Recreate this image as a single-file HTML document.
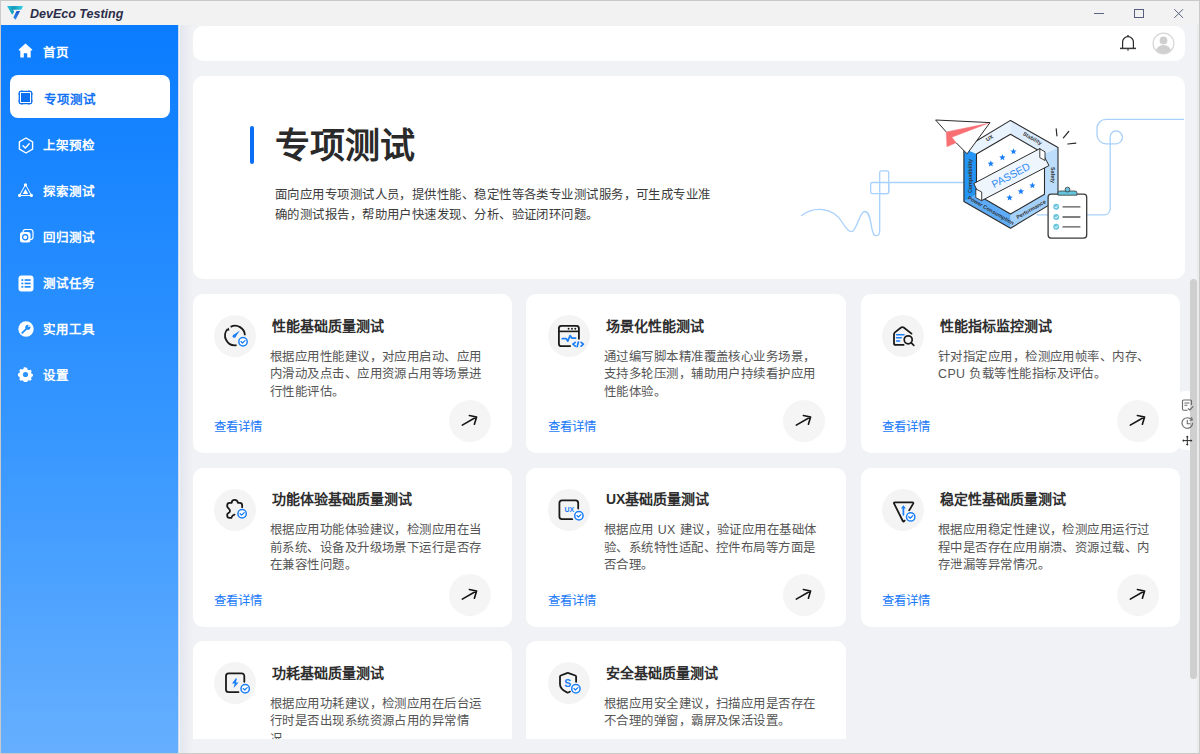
<!DOCTYPE html>
<html lang="zh-CN"><head><meta charset="utf-8">
<style>
*{box-sizing:border-box;margin:0;padding:0}
html,body{width:1200px;height:754px;overflow:hidden;background:#f1f2f5;font-family:"Liberation Sans",sans-serif}
.abs{position:absolute}
#win{position:absolute;left:0;top:0;width:1200px;height:754px;background:#f1f2f5;overflow:hidden}
#tb{position:absolute;left:0;top:0;width:1200px;height:25px;background:#f2f2f2}
#tb .t{position:absolute;left:30px;top:6.5px;font-size:12.5px;font-weight:bold;font-style:italic;color:#2b2d4a}
#side{position:absolute;left:0;top:25px;width:178px;height:728px;background:linear-gradient(180deg,#0a7cff 0%,#3596ff 55%,#66afff 100%)}
.nav{position:absolute;left:0;width:178px;height:24px;color:#fff;font-size:12.5px;font-weight:bold;line-height:16px}
.nav span{position:absolute;left:43px;top:5.5px}
.nav svg{position:absolute;left:17px;top:4px}
.nav.sel{left:10px;width:159.5px;height:43px;background:#fff;border-radius:8px;color:#1273f5}
#hdr{position:absolute;left:193px;top:26px;width:992px;height:35px;background:#fff;border-radius:10px}
#hero{position:absolute;left:193px;top:76px;width:992px;height:202.7px;background:#fff;border-radius:10px}
.card{position:absolute;width:319px;height:159px;background:#fff;border-radius:10px}
.card .ic{position:absolute;left:21px;top:21px;width:42px;height:42px;border-radius:50%;background:#f4f4f4}
.card .ic svg{position:absolute;left:0;top:0}
.card h3{position:absolute;left:79px;top:22.5px;font-size:14px;line-height:18px;font-weight:bold;color:#2e2e2e;white-space:nowrap}
.card p{position:absolute;left:77px;top:54.5px;white-space:nowrap;letter-spacing:0.45px;font-size:12.4px;line-height:17.6px;color:#555}
.card .lk{position:absolute;left:21px;top:125px;font-size:12.4px;line-height:16px;color:#1a7af8;font-weight:500}
.card.c2>*{margin-left:1px}
.card .go{position:absolute;left:256px;top:106px;width:42px;height:42px;border-radius:50%;background:#f5f5f5}
</style></head><body>
<div id="win">
 <div id="tb">
  <svg class="abs" style="left:0;top:0" width="30" height="25" viewBox="0 0 30 25">
   <defs><linearGradient id="lg1" x1="0" y1="0" x2="1" y2="0"><stop offset="0" stop-color="#2cc9dc"/><stop offset="0.4" stop-color="#1597ba"/><stop offset="1" stop-color="#34d4e2"/></linearGradient>
   <linearGradient id="lg2" x1="0" y1="0" x2="0" y2="1"><stop offset="0" stop-color="#1d4fc8"/><stop offset="1" stop-color="#2f90f2"/></linearGradient></defs>
   <path d="M7 6H23.1L21.2 9.8H13.2L14.1 12L12.1 14.8Z" fill="url(#lg1)"/><path d="M16.6 10.9H20.1L15.6 19.8L13.3 17.4Z" fill="url(#lg2)"/>
  </svg>
  <div class="t">DevEco Testing</div>
  <div class="abs" style="left:1094px;top:13px;width:10px;height:1px;background:#5a6480"></div>
  <div class="abs" style="left:1134px;top:9px;width:9.5px;height:9px;border:1px solid #56607e"></div>
  <svg class="abs" style="left:1173px;top:8px" width="12" height="11" viewBox="0 0 12 11"><path d="M1.3 1.2L10 9.9M10 1.2L1.3 9.9" stroke="#56607e" stroke-width="1"/></svg>
 </div>
 <div id="side">
  <div class="nav" style="top:14px"><svg width="15" height="15" viewBox="0 0 15 15" style="left:18px;top:4px"><path d="M7.5 0.5L0.8 6.6V7.4H2.3V14.5H5.8V10.2H9.2V14.5H12.7V7.4H14.2V6.6Z" fill="#fff"/></svg><span>首页</span></div>
  <div class="nav sel" style="top:50px"><svg width="15" height="15" viewBox="0 0 15 15" style="left:8px;top:15px"><rect x="1.3" y="1.3" width="12.4" height="12.4" rx="1.5" fill="none" stroke="#0a6ff0" stroke-width="1.3"/><rect x="3" y="3" width="9" height="9" fill="#0a6ff0"/><path d="M0 4h1.3M0 11h1.3M13.7 4H15M13.7 11H15M4 0v1.3M11 0v1.3M4 13.7V15M11 13.7V15" stroke="#0a6ff0" stroke-width="0.8"/></svg><span style="left:33.5px;top:16.5px">专项测试</span></div>
  <div class="nav" style="top:107px"><svg width="16" height="17" viewBox="0 0 16 17" style="left:18px;top:4.5px"><path d="M8 1L14.6 4.8V12.2L8 16L1.4 12.2V4.8Z" fill="none" stroke="#fff" stroke-width="1.4" stroke-linejoin="round"/><path d="M5 8.7L7.3 10.9L11.2 6.8" fill="none" stroke="#fff" stroke-width="1.4" stroke-linecap="round" stroke-linejoin="round"/></svg><span>上架预检</span></div>
  <div class="nav" style="top:153px"><svg width="15" height="15" viewBox="0 0 15 15" style="left:18px;top:5px"><path d="M7.5 1.5L1.5 12.5H13.5Z" fill="none" stroke="#fff" stroke-width="1"/><path d="M7.5 6L4.8 11H10.2Z" fill="#fff"/><circle cx="7.5" cy="1.8" r="1.6" fill="#fff"/><circle cx="1.6" cy="12.4" r="1.6" fill="#fff"/><circle cx="13.4" cy="12.4" r="1.6" fill="#fff"/></svg><span>探索测试</span></div>
  <div class="nav" style="top:199px"><svg width="15" height="15" viewBox="0 0 15 15" style="left:18.5px;top:5px"><rect x="4" y="0.5" width="10" height="10" rx="2.5" fill="none" stroke="#fff" stroke-width="1.2"/><rect x="1" y="3" width="10.5" height="10.5" rx="2.5" fill="#fff"/><circle cx="6.2" cy="8.3" r="2.6" fill="none" stroke="#1283ff" stroke-width="1.2"/><path d="M6.2 5.5l1.5 0.3" stroke="#1283ff" stroke-width="1"/></svg><span>回归测试</span></div>
  <div class="nav" style="top:245px"><svg width="16" height="17" viewBox="0 0 16 17" style="left:18px;top:4.5px"><rect x="0.5" y="0.5" width="15" height="16" rx="3" fill="#fff"/><g fill="#1e8aff"><rect x="3.4" y="4.2" width="1.9" height="1.7"/><rect x="3.4" y="7.6" width="1.9" height="1.7"/><rect x="3.4" y="11" width="1.9" height="1.7"/><rect x="6.6" y="4.2" width="6" height="1.7"/><rect x="6.6" y="7.6" width="6" height="1.7"/><rect x="6.6" y="11" width="6" height="1.7"/></g></svg><span>测试任务</span></div>
  <div class="nav" style="top:291px"><svg width="16" height="16" viewBox="0 0 15 15" style="left:18px;top:4.5px"><circle cx="7.5" cy="7.5" r="7.2" fill="#fff"/><path d="M4 11.2L7.6 7.6" stroke="#2190ff" stroke-width="1.7" stroke-linecap="round"/><circle cx="9.2" cy="5.8" r="2.4" fill="#2190ff"/><path d="M9.6 3.6L11.6 5.6L10.4 4.2Z" fill="#fff"/><circle cx="10.2" cy="4.8" r="0.9" fill="#fff"/></svg><span>实用工具</span></div>
  <div class="nav" style="top:337px"><svg width="15" height="15" viewBox="0 0 15 15" style="left:18px;top:5px"><path d="M7.5 0.5l1.6 0.3 0.4 1.7 1.3 0.8 1.7-0.5 1.1 1.2-0.5 1.7 0.8 1.3 1.6 0.5v1.6l-1.6 0.5-0.8 1.3 0.5 1.7-1.1 1.2-1.7-0.5-1.3 0.8-0.4 1.7-1.6 0.3-1.6-0.3-0.4-1.7-1.3-0.8-1.7 0.5-1.1-1.2 0.5-1.7-0.8-1.3-1.6-0.5V6.7l1.6-0.5 0.8-1.3-0.5-1.7 1.1-1.2 1.7 0.5 1.3-0.8 0.4-1.7Z" fill="#fff"/><circle cx="7.5" cy="7.5" r="2.6" fill="#2a94ff"/></svg><span>设置</span></div>
 </div>
 <div id="hdr">
  <svg class="abs" style="left:926px;top:8px" width="18" height="18" viewBox="0 0 18 18"><path d="M3.6 14.2V8.2A5.4 5.6 0 0 1 14.4 8.2V14.2" fill="none" stroke="#2a2a2a" stroke-width="1.2"/><path d="M1 14.4H17" stroke="#3a3a3a" stroke-width="1.5"/><circle cx="9" cy="1.9" r="0.9" fill="#2a2a2a"/><rect x="8.3" y="15.2" width="1.4" height="1.4" fill="#2a2a2a"/></svg>
  <svg class="abs" style="left:959px;top:6px" width="23" height="23" viewBox="0 0 23 23"><circle cx="11.5" cy="11.5" r="10.4" fill="#fff" stroke="#d6d6d6" stroke-width="1.2"/><defs><clipPath id="avc"><circle cx="11.5" cy="11.5" r="10"/></clipPath></defs><g clip-path="url(#avc)" fill="#d0d0d0"><circle cx="11.5" cy="8.4" r="3.9"/><ellipse cx="11.5" cy="20" rx="7.8" ry="7"/></g></svg>
 </div>
 <div id="scroll" style="position:absolute;left:178px;top:61px;width:1022px;height:678px;overflow:hidden">
 <div class="card" style="left:15px;top:233px"><div class="ic"><svg width="42" height="42" viewBox="0 0 42 42"><path d="M16.6 11.9A9.8 9.8 0 0 1 30.9 20.2" fill="none" stroke="#1a1a1a" stroke-width="1.8"/><path d="M22.6 30.2A9.8 9.8 0 0 1 13.6 14" fill="none" stroke="#1a1a1a" stroke-width="1.8"/><path d="M12.2 15.2L14.8 12.4L15.4 15.8Z" fill="#1a1a1a"/><path d="M19 20.2L25.8 15.6L21.4 22.2Z" fill="#1b7ef7"/><circle cx="20.2" cy="21.2" r="1.6" fill="#1b7ef7"/><circle cx="29" cy="26.7" r="5.6" fill="#f3f3f3"/><circle cx="29" cy="26.7" r="5.4" fill="#fff"/><circle cx="29" cy="26.7" r="4.2" fill="#fff" stroke="#1b7ef7" stroke-width="1.5"/><path d="M27 26.599999999999998L28.5 28.0L31 25.599999999999998" fill="none" stroke="#1b7ef7" stroke-width="1.3" stroke-linecap="round" stroke-linejoin="round"/></svg></div><h3>性能基础质量测试</h3><p>根据应用性能建议，对应用启动、应用<br>内滑动及点击、应用资源占用等场景进<br>行性能评估。</p><div class="lk">查看详情</div><div class="go"><svg width="42" height="42" viewBox="0 0 42 42"><path d="M13.3 25.1L27.4 17M20.4 15.5L27.6 17L25.4 24.3" fill="none" stroke="#141414" stroke-width="1.6" stroke-linecap="round" stroke-linejoin="round"/></svg></div></div>
 <div class="card c2" style="width:320px;left:348px;top:233px"><div class="ic"><svg width="42" height="42" viewBox="0 0 42 42"><path d="M30.9 24.5V13.4A2.5 2.5 0 0 0 28.4 10.9H13.4A2.5 2.5 0 0 0 10.9 13.4V28.7A2.5 2.5 0 0 0 13.4 31.2H22.8" fill="none" stroke="#1a1a1a" stroke-width="1.8"/><path d="M10.9 16.4H30.9" stroke="#1a1a1a" stroke-width="1.6"/><circle cx="20.6" cy="13.8" r="0.95" fill="#1a1a1a"/><circle cx="24" cy="13.8" r="0.95" fill="#1a1a1a"/><circle cx="27.3" cy="13.8" r="0.95" fill="#1a1a1a"/><path d="M14.2 23.7H18.3L19.8 26.2L22 20.6L24 23.1H27.6" fill="none" stroke="#1b7ef7" stroke-width="1.7" stroke-linecap="round" stroke-linejoin="round"/><path d="M27.3 27.3L24.9 29.2L27.3 31.1M33.1 27.3L35.4 29.2L33.1 31.1M30.4 27L29.2 31.6" fill="none" stroke="#1b7ef7" stroke-width="1.7" stroke-linecap="round" stroke-linejoin="round"/></svg></div><h3>场景化性能测试</h3><p>通过编写脚本精准覆盖核心业务场景，<br>支持多轮压测，辅助用户持续看护应用<br>性能体验。</p><div class="lk">查看详情</div><div class="go"><svg width="42" height="42" viewBox="0 0 42 42"><path d="M13.3 25.1L27.4 17M20.4 15.5L27.6 17L25.4 24.3" fill="none" stroke="#141414" stroke-width="1.6" stroke-linecap="round" stroke-linejoin="round"/></svg></div></div>
 <div class="card" style="left:683px;top:233px"><div class="ic"><svg width="42" height="42" viewBox="0 0 42 42"><path d="M29.5 18.6L21.7 12.6Q20.4 11.7 19.1 12.6L12.9 17.4Q12 18.1 12 19.3V28.2Q12 29.9 13.7 29.9H21.6" fill="none" stroke="#1a1a1a" stroke-width="1.8" stroke-linecap="round"/><path d="M14.6 19.8H22M14.6 22.8H19.2M14.6 26H17.6" stroke="#1b7ef7" stroke-width="1.6" stroke-linecap="round"/><circle cx="26.2" cy="24.8" r="4" fill="none" stroke="#1a1a1a" stroke-width="1.7"/><path d="M29.1 27.7L31.8 30.3" stroke="#1a1a1a" stroke-width="1.7" stroke-linecap="round"/></svg></div><h3>性能指标监控测试</h3><p>针对指定应用，检测应用帧率、内存、<br>CPU 负载等性能指标及评估。</p><div class="lk">查看详情</div><div class="go"><svg width="42" height="42" viewBox="0 0 42 42"><path d="M13.3 25.1L27.4 17M20.4 15.5L27.6 17L25.4 24.3" fill="none" stroke="#141414" stroke-width="1.6" stroke-linecap="round" stroke-linejoin="round"/></svg></div></div>
 <div class="card" style="left:15px;top:406.5px"><div class="ic"><svg width="42" height="42" viewBox="0 0 42 42"><path d="M28.15 18.2V16.3Q28.15 13.8 25.8 13.8H23.9C23.6 11.6 22.2 10.9 20.6 10.9C19 10.9 17.8 11.8 17.6 13.8H15.7Q13.2 13.8 13.2 16.3V17.4C13.4 19.2 16 19.8 16 21.9C16 23.8 13.4 24.2 13.2 25.6V26.5Q13.2 28.9 15.6 28.9H17.3C17.9 27 19 25.9 20.5 25.6" fill="none" stroke="#1a1a1a" stroke-width="1.8" stroke-linecap="round" stroke-linejoin="round"/><circle cx="28.1" cy="24.8" r="5.6" fill="#f3f3f3"/><circle cx="28.1" cy="24.8" r="5.4" fill="#fff"/><circle cx="28.1" cy="24.8" r="4.2" fill="#fff" stroke="#1b7ef7" stroke-width="1.5"/><path d="M26.1 24.7L27.6 26.1L30.1 23.7" fill="none" stroke="#1b7ef7" stroke-width="1.3" stroke-linecap="round" stroke-linejoin="round"/></svg></div><h3>功能体验基础质量测试</h3><p>根据应用功能体验建议，检测应用在当<br>前系统、设备及升级场景下运行是否存<br>在兼容性问题。</p><div class="lk">查看详情</div><div class="go"><svg width="42" height="42" viewBox="0 0 42 42"><path d="M13.3 25.1L27.4 17M20.4 15.5L27.6 17L25.4 24.3" fill="none" stroke="#141414" stroke-width="1.6" stroke-linecap="round" stroke-linejoin="round"/></svg></div></div>
 <div class="card c2" style="width:320px;left:348px;top:406.5px"><div class="ic"><svg width="42" height="42" viewBox="0 0 42 42"><path d="M30.2 19.5V14A2.6 2.6 0 0 0 27.6 11.4H14A2.6 2.6 0 0 0 11.4 14V27.6A2.6 2.6 0 0 0 14 30.2H24.2" fill="none" stroke="#1a1a1a" stroke-width="1.8" stroke-linecap="round"/><text x="21.3" y="23.4" text-anchor="middle" font-family="Liberation Sans" font-weight="bold" font-size="7" fill="#1b7ef7">UX</text><circle cx="30.9" cy="26.7" r="5.6" fill="#f3f3f3"/><circle cx="30.9" cy="26.7" r="5.4" fill="#fff"/><circle cx="30.9" cy="26.7" r="4.2" fill="#fff" stroke="#1b7ef7" stroke-width="1.5"/><path d="M28.9 26.599999999999998L30.4 28.0L32.9 25.599999999999998" fill="none" stroke="#1b7ef7" stroke-width="1.3" stroke-linecap="round" stroke-linejoin="round"/></svg></div><h3>UX基础质量测试</h3><p>根据应用 UX 建议，验证应用在基础体<br>验、系统特性适配、控件布局等方面是<br>否合理。</p><div class="lk">查看详情</div><div class="go"><svg width="42" height="42" viewBox="0 0 42 42"><path d="M13.3 25.1L27.4 17M20.4 15.5L27.6 17L25.4 24.3" fill="none" stroke="#141414" stroke-width="1.6" stroke-linecap="round" stroke-linejoin="round"/></svg></div></div>
 <div class="card" style="left:683px;top:406.5px"><div class="ic"><svg width="42" height="42" viewBox="0 0 42 42"><path d="M27.2 21.4L31.2 14.6Q31.7 13.4 30.4 13.4H12.8Q11.5 13.4 12.1 14.6L20.8 32Q21.6 33.2 22.6 31.6" fill="none" stroke="#1a1a1a" stroke-width="1.8" stroke-linecap="round" stroke-linejoin="round"/><path d="M21.4 25.8V18" stroke="#1b7ef7" stroke-width="1.7" stroke-linecap="round"/><path d="M19 19.6L21.4 16.3L23.9 19.6Z" fill="#1b7ef7"/><circle cx="28.7" cy="27.9" r="5.6" fill="#f3f3f3"/><circle cx="28.7" cy="27.9" r="5.4" fill="#fff"/><circle cx="28.7" cy="27.9" r="4.2" fill="#fff" stroke="#1b7ef7" stroke-width="1.5"/><path d="M26.7 27.799999999999997L28.2 29.2L30.7 26.799999999999997" fill="none" stroke="#1b7ef7" stroke-width="1.3" stroke-linecap="round" stroke-linejoin="round"/></svg></div><h3>稳定性基础质量测试</h3><p>根据应用稳定性建议，检测应用运行过<br>程中是否存在应用崩溃、资源过载、内<br>存泄漏等异常情况。</p><div class="lk">查看详情</div><div class="go"><svg width="42" height="42" viewBox="0 0 42 42"><path d="M13.3 25.1L27.4 17M20.4 15.5L27.6 17L25.4 24.3" fill="none" stroke="#141414" stroke-width="1.6" stroke-linecap="round" stroke-linejoin="round"/></svg></div></div>
 <div class="card" style="left:15px;top:580px"><div class="ic"><svg width="42" height="42" viewBox="0 0 42 42"><path d="M30.3 19.8V14A2.6 2.6 0 0 0 27.7 11.4H14.6A2.6 2.6 0 0 0 12 14V27.5A2.6 2.6 0 0 0 14.6 30.1H24.5" fill="none" stroke="#1a1a1a" stroke-width="1.8" stroke-linecap="round"/><path d="M21.9 16.2L18 21.5H20.7L19.6 26L24.6 20.4H21.9L22.9 16.4Z" fill="#1b7ef7"/><circle cx="31.2" cy="26.7" r="5.6" fill="#f3f3f3"/><circle cx="31.2" cy="26.7" r="5.4" fill="#fff"/><circle cx="31.2" cy="26.7" r="4.2" fill="#fff" stroke="#1b7ef7" stroke-width="1.5"/><path d="M29.2 26.599999999999998L30.7 28.0L33.2 25.599999999999998" fill="none" stroke="#1b7ef7" stroke-width="1.3" stroke-linecap="round" stroke-linejoin="round"/></svg></div><h3>功耗基础质量测试</h3><p>根据应用功耗建议，检测应用在后台运<br>行时是否出现系统资源占用的异常情<br>况。</p></div>
 <div class="card c2" style="width:320px;left:348px;top:580px"><div class="ic"><svg width="42" height="42" viewBox="0 0 42 42"><path d="M28.1 19.8V14.6Q28.1 13.8 27.3 13.5L20.6 11.1Q19.8 10.8 19 11.1L12.8 13.5Q12 13.8 12 14.6V22.2Q12 27.2 19 30.4Q20.4 30.9 22 29.6" fill="none" stroke="#1a1a1a" stroke-width="1.8" stroke-linecap="round" stroke-linejoin="round"/><text x="19.8" y="24.6" text-anchor="middle" font-family="Liberation Sans" font-weight="bold" font-size="10.5" fill="#1b7ef7">S</text><circle cx="27.9" cy="26.7" r="5.6" fill="#f3f3f3"/><circle cx="27.9" cy="26.7" r="5.4" fill="#fff"/><circle cx="27.9" cy="26.7" r="4.2" fill="#fff" stroke="#1b7ef7" stroke-width="1.5"/><path d="M25.9 26.599999999999998L27.4 28.0L29.9 25.599999999999998" fill="none" stroke="#1b7ef7" stroke-width="1.3" stroke-linecap="round" stroke-linejoin="round"/></svg></div><h3>安全基础质量测试</h3><p>根据应用安全建议，扫描应用是否存在<br>不合理的弹窗，霸屏及保活设置。</p></div>
</div>
 <div id="hero">
<svg class="abs" style="left:0;top:0" width="991" height="202" viewBox="193 76 991 202">
 <g fill="none" stroke="#a9d1fb" stroke-width="1.3" stroke-linecap="round">
  <path d="M801.7 215.5C813 207 832 206 842 222C847 230 850 233 853 231C858 226 860 211.5 864.7 211.5C870 211.5 870.5 222 872 229C873 234 874 235.7 876 235.7C878.5 235.7 879.7 234 879.7 231V193.7"/>
  <rect x="879.7" y="170.8" width="9" height="22.9" rx="1.6"/>
  <rect x="870.7" y="182.5" width="18" height="11.2" rx="1.6"/>
  <path d="M888.7 182.5H964"/>
  <path d="M1184 119.3H1106A9 9 0 0 0 1097 128.3V134.8A9 9 0 0 0 1106 143.8H1116A6.45 6.45 0 0 0 1116 130.9A6 6 0 0 0 1110.2 136.9V209A5.8 5.8 0 0 1 1104.4 214.8H1087"/>
  <path d="M1037 214.8H1048"/>
 </g>
 <polygon points="963.9,148.5 1010.5,120.4 1010.5,134.2 976.5,153.9" fill="#e9f4fe" />
 <polygon points="1010.5,120.4 1058,147.6 1044.5,153.9 1010.5,134.2" fill="#ddedfd" />
 <polygon points="1058,147.6 1058,199.6 1044.5,194.2 1044.5,153.9" fill="#bcdefc" />
 <polygon points="1058,199.6 1010.5,228.3 1010.5,214 1044.5,194.2" fill="#a3d1fb" />
 <polygon points="1010.5,228.3 963.9,201.4 976.5,194.2 1010.5,214" fill="#5eacf7" />
 <polygon points="963.9,201.4 963.9,148.5 976.5,153.9 976.5,194.2" fill="#2495f4" />
 <polygon points="1010.5,120.4 1058,147.6 1058,199.6 1010.5,228.3 963.9,201.4 963.9,148.5" fill="none" stroke="#2b2b2b" stroke-width="1.1" stroke-linejoin="round"/>
 <polygon points="1010.5,134.2 1044.5,153.9 1044.5,194.2 1010.5,214 976.5,194.2 976.5,153.9" fill="#fff" stroke="#2b2b2b" stroke-width="1.1" stroke-linejoin="round"/>
 <g font-family="Liberation Sans" font-size="5.4" font-weight="bold" fill="#333" text-anchor="middle">
  <text transform="translate(990.5,139.5) rotate(-30)">UX</text>
  <text transform="translate(1031.5,140) rotate(30)">Stability</text>
  <text transform="translate(1050.5,175) rotate(90)">Safety</text>
  <text transform="translate(1032,211) rotate(-30)">Performance</text>
  <text transform="translate(990,212) rotate(30)">Power Consumption</text>
  <text transform="translate(971.5,176) rotate(-90)">Compatibility</text>
 </g>
 <polygon points="990.80,160.50 991.67,162.60 993.94,162.78 992.21,164.26 992.74,166.47 990.80,165.29 988.86,166.47 989.39,164.26 987.66,162.78 989.93,162.60" fill="#1a7ff5"/><polygon points="1002.40,154.20 1003.27,156.30 1005.54,156.48 1003.81,157.96 1004.34,160.17 1002.40,158.99 1000.46,160.17 1000.99,157.96 999.26,156.48 1001.53,156.30" fill="#1a7ff5"/><polygon points="1013.50,148.30 1014.37,150.40 1016.64,150.58 1014.91,152.06 1015.44,154.27 1013.50,153.09 1011.56,154.27 1012.09,152.06 1010.36,150.58 1012.63,150.40" fill="#1a7ff5"/>
 <polygon points="1009.60,194.50 1010.47,196.60 1012.74,196.78 1011.01,198.26 1011.54,200.47 1009.60,199.29 1007.66,200.47 1008.19,198.26 1006.46,196.78 1008.73,196.60" fill="#1a7ff5"/><polygon points="1020.90,188.20 1021.77,190.30 1024.04,190.48 1022.31,191.96 1022.84,194.17 1020.90,192.99 1018.96,194.17 1019.49,191.96 1017.76,190.48 1020.03,190.30" fill="#1a7ff5"/><polygon points="1032.40,182.30 1033.27,184.40 1035.54,184.58 1033.81,186.06 1034.34,188.27 1032.40,187.09 1030.46,188.27 1030.99,186.06 1029.26,184.58 1031.53,184.40" fill="#1a7ff5"/>
 
 
 <polygon points="973.8,183.5 1040,148.5 1049,165.6 981.8,200.5" fill="#eef5fd" stroke="#2b2b2b" stroke-width="1"/>
 <polygon points="975.8,189 981.7,192 981.7,200.8 975.8,197.6" fill="#fff" stroke="#2b2b2b" stroke-width="0.9"/>
 <polygon points="1039.8,148.9 1045,151.8 1045,160.5 1039.8,157.6" fill="#fff" stroke="#2b2b2b" stroke-width="0.9"/>
 <text transform="translate(1012.5,178.5) rotate(-27.5)" font-family="Liberation Sans" font-size="10.5" fill="#2f8cf5" text-anchor="middle">PASSED</text>
 <polygon points="935.6,120 990,122.6 967.1,153.8 956.2,142.8 946.9,146.8 946.2,131.9" fill="#fff"/>
 <polygon points="946.2,131.9 988.4,123.3 951.9,137.2 956.2,142.8 946.9,146.8" fill="#f76f73" stroke="#f76f73" stroke-width="0.4" stroke-linejoin="round"/>
 <path d="M946.2 131.9L935.6 120L990 122.6L967.1 153.8L956.2 142.8" fill="none" stroke="#2b2b2b" stroke-width="1" stroke-linejoin="round"/>
 <g stroke="#2b2b2b" stroke-width="1.2" stroke-linecap="round">
  <path d="M1056.2 128.8L1056.9 135.8M1063.4 137.8L1068.7 131.5M1067.8 144L1075.8 143.2"/>
 </g>
 <rect x="1048.1" y="194.2" width="38.6" height="43.9" rx="3" fill="#fff" stroke="#3a3a3a" stroke-width="1.3"/>
 <path d="M1058 195.2V193Q1058 191 1060 191H1075Q1077 191 1077 193V195.2Z" fill="#66c3dd" stroke="#3a3a3a" stroke-width="0.8"/>
 <circle cx="1067.5" cy="189.6" r="2.4" fill="#66c3dd" stroke="#3a3a3a" stroke-width="0.8"/>
 <g fill="#6cc6de"><circle cx="1056.2" cy="206.8" r="3"/><circle cx="1056.2" cy="217" r="3"/><circle cx="1056.2" cy="226.8" r="3"/></g>
 <g fill="none" stroke="#fff" stroke-width="0.9" stroke-linecap="round"><path d="M1054.8 206.9L1055.9 208L1057.7 205.9M1054.8 217.1L1055.9 218.2L1057.7 216.1M1054.8 226.9L1055.9 228L1057.7 225.9"/></g>
 <g stroke="#555" stroke-width="1.3"><path d="M1062.5 206.8H1080.4M1062.5 217H1080.4M1062.5 226.8H1080.4"/></g>
</svg>
  <div class="abs" style="left:57px;top:50px;width:4px;height:38px;background:#0a6ff5;border-radius:2px"></div>
  <div class="abs" style="left:82px;top:45px;font-size:35px;font-weight:bold;color:#2a2a2a;white-space:nowrap;line-height:50px">专项测试</div>
  <div class="abs" style="left:82px;top:109px;white-space:nowrap;letter-spacing:0.45px;font-size:12.4px;line-height:20px;color:#3c3c3c">面向应用专项测试人员，提供性能、稳定性等各类专业测试服务，可生成专业准<br>确的测试报告，帮助用户快速发现、分析、验证闭环问题。</div>
 </div>
<div class="abs" style="left:178px;top:25px;width:1px;height:729px;background:#c8dcf8"></div>
 <div class="abs" style="left:179px;top:25px;width:1px;height:729px;background:#f6f3f1"></div>
 <div class="abs" style="left:180px;top:25px;width:13px;height:729px;background:linear-gradient(90deg,#e3e7ee,#f1f2f5)"></div>
 <div class="abs" style="left:1177px;top:390.5px;width:22px;height:59.5px;background:#fff;border-radius:8px 0 0 8px"></div>
 
 <div class="abs" style="left:1190px;top:279px;width:7px;height:399.5px;background:#cfcfcf;border-radius:3.5px"></div>
 <svg class="abs" style="left:1181px;top:398px" width="14" height="50" viewBox="0 0 14 50">
  <g fill="none" stroke="#6a6a6a" stroke-width="1.1" stroke-linecap="round" stroke-linejoin="round">
   <path d="M10.5 6.5V3.2Q10.5 2 9.3 2H2.7Q1.5 2 1.5 3.2V11Q1.5 12.2 2.7 12.2H6.2"/><path d="M3.8 5H8M3.8 7.3H6"/><path d="M7.3 10.6L8.8 12L12 8.6"/>
   <path d="M11.6 25.4A5.3 5.3 0 1 1 10.4 21.6"/><path d="M6.3 22.3V25.8H9"/><path d="M10.6 19.6L11.4 22L9 22.3"/>
  </g>
  <g fill="#2a2a2a"><path d="M6.3 38.6V46.6M2.3 42.6H10.3" stroke="#2a2a2a" stroke-width="1"/><path d="M6.3 37.5L4.9 39.2H7.7Z"/><path d="M6.3 47.7L4.9 46H7.7Z"/><path d="M1.2 42.6L2.9 41.2V44Z"/><path d="M11.4 42.6L9.7 41.2V44Z"/></g>
 </svg>
 <div class="abs" style="left:1197px;top:25px;width:2px;height:729px;background:#ebebeb"></div>
 <div class="abs" style="left:0;top:0;width:1200px;height:754px;border:1px solid #c9c9c9;pointer-events:none"></div>
</div>
</body></html>
